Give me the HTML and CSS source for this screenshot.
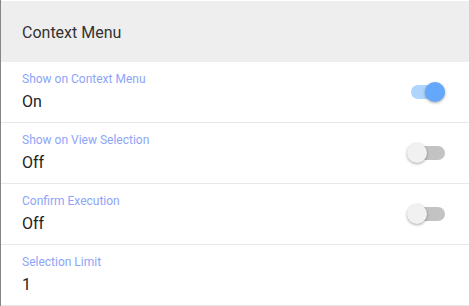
FILE: index.html
```html
<!DOCTYPE html>
<html lang="en">
<head>
  <meta charset="UTF-8" />
  <title>Context Menu</title>
  <link rel="stylesheet" href="styles.css">
</head>
<body>
  <div class="panel">
    <div class="header">Context Menu</div>

    <div class="row">
      <div class="text">
        <div class="label">Show on Context Menu</div>
        <div class="value">On</div>
      </div>
      <span class="switch on"><span class="track"></span><span class="thumb"></span></span>
    </div>

    <div class="row">
      <div class="text">
        <div class="label">Show on View Selection</div>
        <div class="value">Off</div>
      </div>
      <span class="switch"><span class="track"></span><span class="thumb"></span></span>
    </div>

    <div class="row">
      <div class="text">
        <div class="label">Confirm Execution</div>
        <div class="value">Off</div>
      </div>
      <span class="switch"><span class="track"></span><span class="thumb"></span></span>
    </div>

    <div class="row">
      <div class="text">
        <div class="label">Selection Limit</div>
        <div class="value">1</div>
      </div>
    </div>
  </div>
</body>
</html>
```

FILE: styles.css
```css
* { margin: 0; padding: 0; box-sizing: border-box; }
body {
  font-family: Roboto, "Noto Sans", sans-serif;
  background: white;
  color: #222;
}
.panel {
  border-left: 1px solid #858585;
  padding-top: 1px;
  height: 306px;
}
.header {
  height: 61px;
  background: #eeeeee;
  padding-left: 21px;
  padding-top: 1px;
  display: flex;
  align-items: center;
  font-size: 16px;
  color: #333;
}
.row {
  height: 61px;
  border-bottom: 1px solid #e8e8e8;
  padding-left: 21px;
  padding-right: 24px;
  display: flex;
  align-items: center;
}
.text {
  flex: 1;
  align-self: flex-start;
  padding-top: 10px;
}
.label {
  font-size: 12px;
  line-height: 14px;
  color: #8ea4f7;
}
.value {
  font-size: 16px;
  line-height: 20px;
  margin-top: 6px;
  color: #222;
}
.switch {
  position: relative;
  width: 38px;
  height: 20px;
}
.track {
  position: absolute;
  left: 4px;
  top: 3px;
  width: 34px;
  height: 14px;
  border-radius: 7px;
  background: #c3c3c3;
}
.thumb {
  position: absolute;
  left: 0;
  top: 0;
  width: 20px;
  height: 20px;
  border-radius: 50%;
  background: #f1f1f1;
  box-shadow: 0 1px 3px rgba(0,0,0,0.35);
}
.switch.on .track { background: #aed5fd; }
.switch.on .thumb { left: 18px; background: #64a8fb; }
```
